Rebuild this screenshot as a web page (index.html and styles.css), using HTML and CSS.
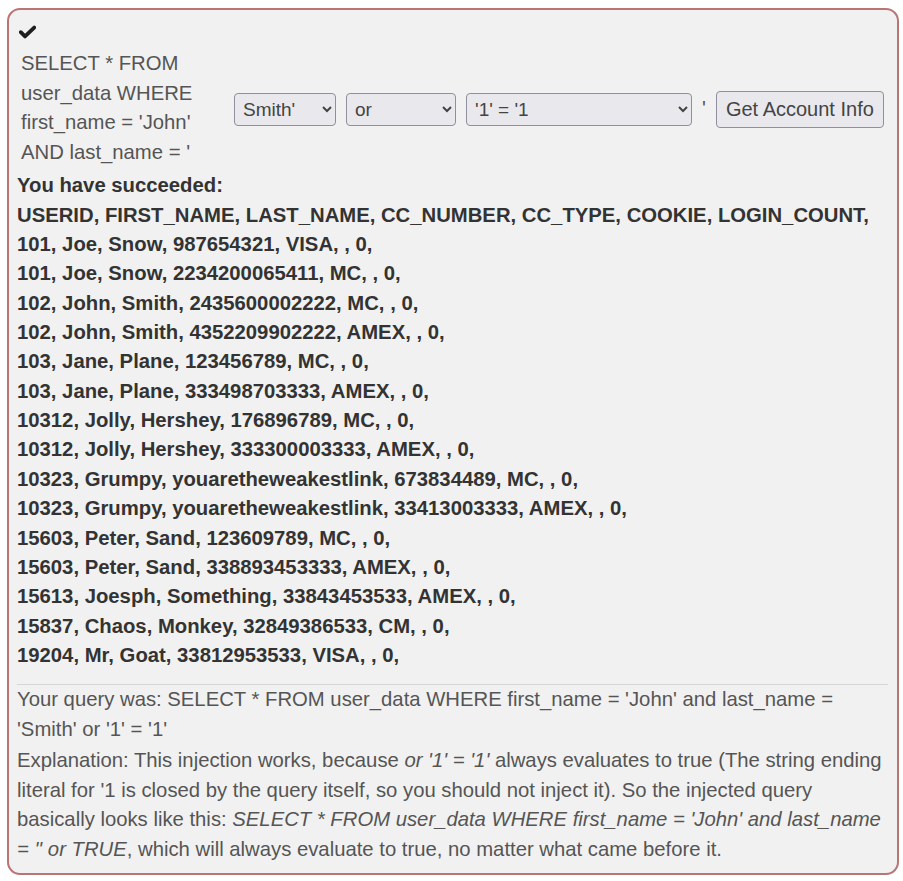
FILE: index.html
```html
<!DOCTYPE html>
<html>
<head>
<meta charset="utf-8">
<link rel="stylesheet" href="styles.css">
</head>
<body>
<div class="feedback">
  <div class="check">
    <svg width="17" height="14" viewBox="0 0 17 14"><path d="M1.8 7.2 L6 11.4 L15.2 2.6" fill="none" stroke="#1e1e1e" stroke-width="3.8" stroke-linecap="round" stroke-linejoin="round"/></svg>
  </div>
  <form class="query-form">
    <div class="sql">SELECT * FROM user_data WHERE first_name = 'John' AND last_name = '</div>
    <select class="sel sel-a"><option>Smith'</option></select>
    <select class="sel sel-b"><option>or</option></select>
    <select class="sel sel-c"><option>'1' = '1</option></select>
    <span class="quote">'</span>
    <button type="button" class="btn">Get Account Info</button>
  </form>
  <div class="output">
    <div>You have succeeded:</div>
    <div>USERID, FIRST_NAME, LAST_NAME, CC_NUMBER, CC_TYPE, COOKIE, LOGIN_COUNT, </div>
    <div>101, Joe, Snow, 987654321, VISA, , 0, </div>
    <div>101, Joe, Snow, 2234200065411, MC, , 0, </div>
    <div>102, John, Smith, 2435600002222, MC, , 0, </div>
    <div>102, John, Smith, 4352209902222, AMEX, , 0, </div>
    <div>103, Jane, Plane, 123456789, MC, , 0, </div>
    <div>103, Jane, Plane, 333498703333, AMEX, , 0, </div>
    <div>10312, Jolly, Hershey, 176896789, MC, , 0, </div>
    <div>10312, Jolly, Hershey, 333300003333, AMEX, , 0, </div>
    <div>10323, Grumpy, youaretheweakestlink, 673834489, MC, , 0, </div>
    <div>10323, Grumpy, youaretheweakestlink, 33413003333, AMEX, , 0, </div>
    <div>15603, Peter, Sand, 123609789, MC, , 0, </div>
    <div>15603, Peter, Sand, 338893453333, AMEX, , 0, </div>
    <div>15613, Joesph, Something, 33843453533, AMEX, , 0, </div>
    <div>15837, Chaos, Monkey, 32849386533, CM, , 0, </div>
    <div>19204, Mr, Goat, 33812953533, VISA, , 0, </div>
  </div>
  <hr class="rule">
  <p class="note">Your query was: SELECT * FROM user_data WHERE first_name = 'John' and last_name = 'Smith' or '1' = '1'</p>
  <p class="note">Explanation: This injection works, because <em>or '1' = '1'</em> always evaluates to true (The string ending literal for '1 is closed by the query itself, so you should not inject it). So the injected query basically looks like this: <em>SELECT * FROM user_data WHERE first_name = 'John' and last_name = '' or TRUE</em>, which will always evaluate to true, no matter what came before it.</p>
</div>
</body>
</html>
```
FILE: styles.css
```css
html, body {
  margin: 0;
  padding: 0;
  background: #ffffff;
}
body {
  font-family: "Liberation Sans", Arial, sans-serif;
  font-size: 20.3px;
  line-height: 29.35px;
  color: #555555;
}
.feedback {
  margin: 8px 6px 0 7px;
  width: 872px;
  height: 849px;
  border: 2px solid #b97474;
  border-radius: 13px;
  background: #f1f1f1;
  padding: 6px 8px 8px 8px;
}
.check {
  height: 31px;
  padding: 9px 0 0 2px;
  box-sizing: border-box;
  line-height: 0;
}
.query-form {
  display: flex;
  align-items: center;
  margin: 0;
}
.sql {
  width: 180px;
  padding: 2px 4px 2px 4px;
  margin-right: 29px;
  line-height: 29.6px;
}
.sel {
  font-family: "Liberation Sans", Arial, sans-serif;
  font-size: 19px;
  height: 33px;
  margin: 3px 10px 0 0;
  color: #444;
  background-color: #e9e9ed;
  border: 1px solid #8f8f9d;
  border-radius: 4px;
  padding: 0 4px;
}
.sel-a { width: 102px; }
.sel-b { width: 110px; }
.sel-c { width: 226px; }
.quote {
  margin: 0 10px 0 0;
  color: #555;
}
.btn {
  font-family: "Liberation Sans", Arial, sans-serif;
  font-size: 20px;
  height: 37px;
  width: 168px;
  margin-top: 2px;
  padding: 0 6px;
  color: #444;
  background-color: #e9e9ed;
  border: 1px solid #8f8f9d;
  border-radius: 4px;
}
.output {
  font-weight: bold;
  color: #333333;
  margin-top: 2px;
}
.rule {
  border: 0;
  border-top: 1px solid #d6d6d6;
  margin: 14px 1px 0 0;
  height: 0;
}
.note {
  margin: 0 0 1px 0;
  line-height: 29.8px;
}
.note em {
  font-style: italic;
}
```
